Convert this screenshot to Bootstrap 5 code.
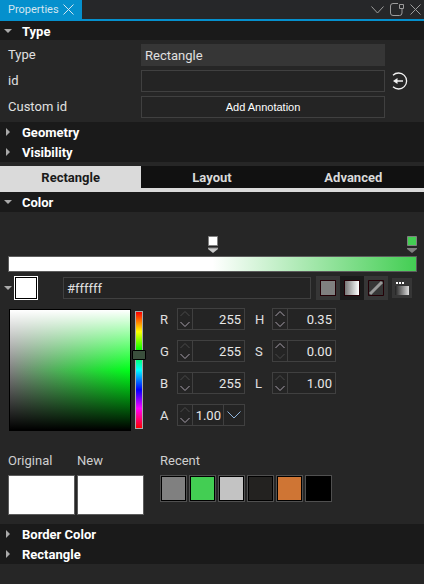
<!DOCTYPE html>
<html lang="en" data-bs-theme="dark">
<head>
<meta charset="utf-8">
<meta name="viewport" content="width=device-width, initial-scale=1">
<title>Properties</title>
<link href="https://cdn.jsdelivr.net/npm/bootstrap@5.3.0/dist/css/bootstrap.min.css" rel="stylesheet">
<style>
  body { background: #262626; color: #e0e0e0; font: 13px/20px Roboto, "Liberation Sans", sans-serif; }
  button { background: none; border: 0; padding: 0; color: inherit; }
  svg { display: block; flex: none; }
  .dock-bar { height: 21px; background: #262729; border-bottom: 2px solid #0590cd; }
  .dock-tab { width: 82px; padding: 0 8px; background: #0590cd; color: #d3e6f0; font-size: 11px; line-height: 19px; }
  .dock-tools { gap: 6px; padding-right: 3px; color: #9c9c9c; }
  .section-head { display: flex; align-items: center; width: 100%; height: 20px; padding-left: 4px; gap: 10px; background: #1a1a1a; color: #fff; font-weight: 700; line-height: 20px; text-align: left; }
  .section-head span { padding-top: 2px; }
  .head-first { height: 19px; }
  .prop-grid { display: grid; grid-template-columns: 133px 1fr 22px; row-gap: 4px; padding: 4px 17px 4px 8px; align-items: center; }
  .prop-grid label { line-height: 22px; }
  .field { width: 100%; min-width: 0; height: 22px; padding: 0 3px; background: #242424; border: 1px solid #404040; border-radius: 0; color: #e0e0e0; line-height: 20px; }
  .field-fixed { background: #363636; border-color: #363636; }
  .annotate { padding: 0; font: 11px/20px "Liberation Sans", Arial, sans-serif; color: #fff; }
  .reset { padding-left: 6px; color: #f2f2f2; }
  .view-tabs { margin-top: 4px; border-bottom: 4px solid #dadada; background: #111; }
  .view-tabs button { flex: 1 1 0; height: 22px; padding-top: 2px; color: #dadada; font-weight: 700; line-height: 20px; }
  .view-tabs .current { background: #dadada; color: #1a1a1a; }
  .gradient-editor { padding: 24px 7px 0 8px; }
  .stops { display: grid; grid-template-columns: 1fr auto 1fr; }
  .stops button:last-child { justify-self: end; }
  .ramp { height: 16px; margin-top: 2px; border: 1px solid #5c5c5c; background: linear-gradient(90deg, #fff 50%, #43ce53); }
  .color-line { padding: 4px 12px 0 4px; }
  .current-chip { width: 24px; height: 24px; margin-left: 2px; border: 1px solid #fff; outline: 1px solid #000; outline-offset: -2px; background: #fff; }
  .hex { flex: 1; margin-left: 25px; margin-right: 5px; }
  .mode { display: grid; place-items: center; width: 24px; height: 24px; background: #363636; }
  .mode-on { background: #1a1a1a; }
  .mode-chip { display: block; width: 16px; height: 16px; border: 1px solid #230006; }
  .solid { background: #808080; }
  .fade-chip { background: linear-gradient(90deg, #777, #fff); }
  .picker-mode { display: grid; place-items: center; width: 20px; height: 20px; margin-left: 4px; background: #363636; }
  .picker-row { padding: 8px 8px 0 9px; }
  .shade { width: 122px; height: 122px; margin-top: 1px; border: 1px solid #000; background: linear-gradient(#fff, #fff0 50%, #0000 50%, #000), linear-gradient(90deg, #808080, #00ff1a); }
  .hue { appearance: none; writing-mode: vertical-lr; width: 14px; height: 118px; margin: 3px 0 0 1px; background: linear-gradient(red, #ff0 17%, #0f0 33%, #0ff 50%, #00f 67%, #f0f 83%, red) center / 6px 116px no-repeat, linear-gradient(#aaa, #aaa) center / 8px 118px no-repeat; }
  .hue::-webkit-slider-runnable-track { background: none; width: 14px; height: 118px; }
  .hue::-webkit-slider-thumb { appearance: none; width: 14px; height: 10px; border: 1px solid #000; border-radius: 1px; background: #3a4f3c; }
  .channels { display: grid; grid-template-columns: 17px 68px 27px 64px; grid-auto-rows: 22px; row-gap: 10px; margin-left: 14px; }
  .channels label { line-height: 24px; }
  .channels label:nth-of-type(even) { padding-left: 10px; }
  .spin { border: 1px solid #404040; background: #242424; }
  .spin input { width: 100%; min-width: 0; padding: 2px 3px 0; background: none; border: 0; color: #e8e8e8; line-height: 18px; text-align: right; }
  .spin .snug { padding-left: 0; padding-right: 2px; }
  .steps { flex: none; width: 15px; border-right: 1px solid #404040; color: #a79fab; }
  .steps button { display: grid; place-items: center; width: 100%; height: 10px; }
  .steps .off { color: #484848; }
  .drop { display: grid; place-items: center; flex: none; width: 21px; border-left: 1px solid #404040; color: #8fb4dc; }
  .swatches { padding: 20px 8px 9px; }
  .swatches h2 { margin: 0 0 4px; color: #cfcfcf; font-size: 13px; font-weight: 400; line-height: 20px; }
  .big-chip { display: block; width: 67px; height: 40px; border: 1px solid #5c5c5c; background: #fff; }
  .chip-pair, .recent-list { gap: 2px; }
  .recent { margin-left: 16px; }
  .recent-chip { width: 27px; height: 27px; border: 1px solid #505050; box-shadow: inset 0 0 0 1px #000; }
</style>
<script src="https://cdn.jsdelivr.net/npm/bootstrap@5.3.0/dist/js/bootstrap.bundle.min.js"></script>
</head>
<body>
<svg class="d-none" aria-hidden="true">
  <symbol id="down" viewBox="0 0 8 8"><path d="M0 2h8L4 6z" fill="#aaa"/></symbol>
  <symbol id="right" viewBox="0 0 8 8"><path d="M2 0v8l4-4z" fill="#aaa"/></symbol>
  <symbol id="up-step" viewBox="0 0 10 6"><path d="M.5 5 5 .5 9.500 5" fill="none" stroke="currentColor"/></symbol>
  <symbol id="down-step" viewBox="0 0 10 6"><path d="M.5 1 5 5.500 9.500 1" fill="none" stroke="currentColor"/></symbol>
</svg>

<header class="dock-bar d-flex justify-content-between">
  <div class="dock-tab d-flex justify-content-between align-items-center">
    <span>Properties</span>
    <button type="button" aria-label="Close Properties"><svg width="11" height="11"><path d="M.5.5l10 10m0-10l-10 10" stroke="#d3e6f0"/></svg></button>
  </div>
  <div class="dock-tools d-flex align-items-center">
    <button type="button" aria-label="Panel menu"><svg width="13" height="8" fill="none" stroke="currentColor"><path d="M.5.500 6.500 7l6-6.500"/></svg></button>
    <button type="button" aria-label="Float panel"><svg width="14" height="13" fill="none" stroke="currentColor"><path d="M8 .5H3Q.5.500.5 3v7Q.5 12.500 3 12.500h6.500q2.500 0 2.500-2.500V6M9.500 1.500h4v4h-4z"/></svg></button>
    <button type="button" aria-label="Close panel"><svg width="11" height="11"><path d="M.5.5l10 10m0-10l-10 10" stroke="currentColor"/></svg></button>
  </div>
</header>

<main>
  <button type="button" class="section-head head-first" aria-expanded="true"><svg width="8" height="8"><use href="#down"/></svg><span>Type</span></button>
  <div class="prop-grid">
    <label for="type">Type</label>
    <input class="field field-fixed" id="type" value="Rectangle" readonly><span></span>
    <label for="ident">id</label>
    <input class="field" id="ident">
    <button type="button" class="reset" aria-label="Export id"><svg width="17" height="20" fill="none" stroke="currentColor"><path d="M2 4.300a8 8 0 1 1 0 11.400" stroke-width="1.300"/><path d="M5 10h7" stroke-width="1.500"/><path d="M2 10l4.500-3v6z" fill="currentColor" stroke="none"/></svg></button>
    <label for="custom">Custom id</label>
    <button type="button" class="field annotate" id="custom">Add Annotation</button>
  </div>
  <button type="button" class="section-head" aria-expanded="false"><svg width="8" height="8"><use href="#right"/></svg><span>Geometry</span></button>
  <button type="button" class="section-head" aria-expanded="false"><svg width="8" height="8"><use href="#right"/></svg><span>Visibility</span></button>

  <div class="view-tabs d-flex" role="tablist">
    <button type="button" role="tab" class="current" aria-selected="true">Rectangle</button>
    <button type="button" role="tab" aria-selected="false">Layout</button>
    <button type="button" role="tab" aria-selected="false">Advanced</button>
  </div>

  <button type="button" class="section-head" aria-expanded="true"><svg width="8" height="8"><use href="#down"/></svg><span>Color</span></button>
  <div class="gradient-editor">
    <div class="stops">
      <span></span>
      <button type="button" aria-label="White stop"><svg width="10" height="18"><path d="M.5.5h9v9h-9z" fill="#fff" stroke="#808080"/><path d="M0 12h10v1L5 17 0 13z" fill="#c8c8c8"/><path d="M0 12h10" stroke="#808080"/></svg></button>
      <button type="button" aria-label="Green stop"><svg width="10" height="18"><path d="M.5.5h9v9h-9z" fill="#43ce53" stroke="#808080"/><path d="M0 12h10v1L5 17 0 13z" fill="#808080"/></svg></button>
    </div>
    <div class="ramp"></div>
  </div>
  <div class="color-line d-flex align-items-center">
    <button type="button" aria-label="Toggle color picker"><svg width="8" height="8"><use href="#down"/></svg></button>
    <span class="current-chip"></span>
    <input class="field hex" aria-label="Hex color" value="#ffffff">
    <div class="d-flex">
      <button type="button" class="mode" aria-label="Solid"><span class="mode-chip solid"></span></button>
      <button type="button" class="mode mode-on" aria-label="Gradient"><span class="mode-chip fade-chip"></span></button>
      <button type="button" class="mode" aria-label="No color"><svg width="16" height="16"><path d="M.5.5h15v15H.5z" fill="#363636" stroke="#230006"/><path d="M2 14 14 2" stroke="#999" stroke-width="3"/></svg></button>
    </div>
    <button type="button" class="picker-mode" aria-label="Gradient settings"><svg width="14" height="14"><defs><linearGradient id="fade"><stop stop-color="#222"/><stop offset="1" stop-color="#ddd"/></linearGradient></defs><path d="M1 1h2v2H1zM4 1h2v2H4zM7 1h2v2H7z" fill="#fff"/><path d="M0 5h14v9H0z" fill="url(#fade)"/></svg></button>
  </div>

  <div class="picker-row d-flex align-items-start">
    <div class="shade"></div>
    <input class="hue" type="range" min="0" max="100" value="36" aria-label="Hue">
    <div class="channels">
      <label for="r">R</label>
      <div class="spin d-flex"><div class="steps"><button type="button" class="off" aria-label="Increase R"><svg width="10" height="6"><use href="#up-step"/></svg></button><button type="button" aria-label="Decrease R"><svg width="10" height="6"><use href="#down-step"/></svg></button></div><input id="r" value="255"></div>
      <label for="h">H</label>
      <div class="spin d-flex"><div class="steps"><button type="button" aria-label="Increase H"><svg width="10" height="6"><use href="#up-step"/></svg></button><button type="button" aria-label="Decrease H"><svg width="10" height="6"><use href="#down-step"/></svg></button></div><input id="h" value="0.35"></div>
      <label for="g">G</label>
      <div class="spin d-flex"><div class="steps"><button type="button" class="off" aria-label="Increase G"><svg width="10" height="6"><use href="#up-step"/></svg></button><button type="button" aria-label="Decrease G"><svg width="10" height="6"><use href="#down-step"/></svg></button></div><input id="g" value="255"></div>
      <label for="s">S</label>
      <div class="spin d-flex"><div class="steps"><button type="button" aria-label="Increase S"><svg width="10" height="6"><use href="#up-step"/></svg></button><button type="button" class="off" aria-label="Decrease S"><svg width="10" height="6"><use href="#down-step"/></svg></button></div><input id="s" value="0.00"></div>
      <label for="b">B</label>
      <div class="spin d-flex"><div class="steps"><button type="button" class="off" aria-label="Increase B"><svg width="10" height="6"><use href="#up-step"/></svg></button><button type="button" aria-label="Decrease B"><svg width="10" height="6"><use href="#down-step"/></svg></button></div><input id="b" value="255"></div>
      <label for="l">L</label>
      <div class="spin d-flex"><div class="steps"><button type="button" class="off" aria-label="Increase L"><svg width="10" height="6"><use href="#up-step"/></svg></button><button type="button" aria-label="Decrease L"><svg width="10" height="6"><use href="#down-step"/></svg></button></div><input id="l" value="1.00"></div>
      <label for="a">A</label>
      <div class="spin d-flex"><div class="steps"><button type="button" class="off" aria-label="Increase A"><svg width="10" height="6"><use href="#up-step"/></svg></button><button type="button" aria-label="Decrease A"><svg width="10" height="6"><use href="#down-step"/></svg></button></div><input class="snug" id="a" value="1.00"><button type="button" class="drop" aria-label="Alpha slider"><svg width="14" height="8"><path d="M.5.500 7 7l6.500-6.500" fill="none" stroke="currentColor"/></svg></button></div>
    </div>
  </div>

  <div class="swatches d-flex">
    <div class="chip-pair d-flex">
      <div><h2>Original</h2><span class="big-chip"></span></div>
      <div><h2>New</h2><span class="big-chip"></span></div>
    </div>
    <div class="recent">
      <h2>Recent</h2>
      <div class="d-flex recent-list">
        <button type="button" class="recent-chip" style="background:#808080" aria-label="Gray"></button>
        <button type="button" class="recent-chip" style="background:#43ce53" aria-label="Green"></button>
        <button type="button" class="recent-chip" style="background:#c3c3c3" aria-label="Silver"></button>
        <button type="button" class="recent-chip" style="background:#232220" aria-label="Charcoal"></button>
        <button type="button" class="recent-chip" style="background:#cf7534" aria-label="Orange"></button>
        <button type="button" class="recent-chip" style="background:#000000" aria-label="Black"></button>
      </div>
    </div>
  </div>
  <button type="button" class="section-head" aria-expanded="false"><svg width="8" height="8"><use href="#right"/></svg><span>Border Color</span></button>
  <button type="button" class="section-head" aria-expanded="false"><svg width="8" height="8"><use href="#right"/></svg><span>Rectangle</span></button>
</main>
</body>
</html>
